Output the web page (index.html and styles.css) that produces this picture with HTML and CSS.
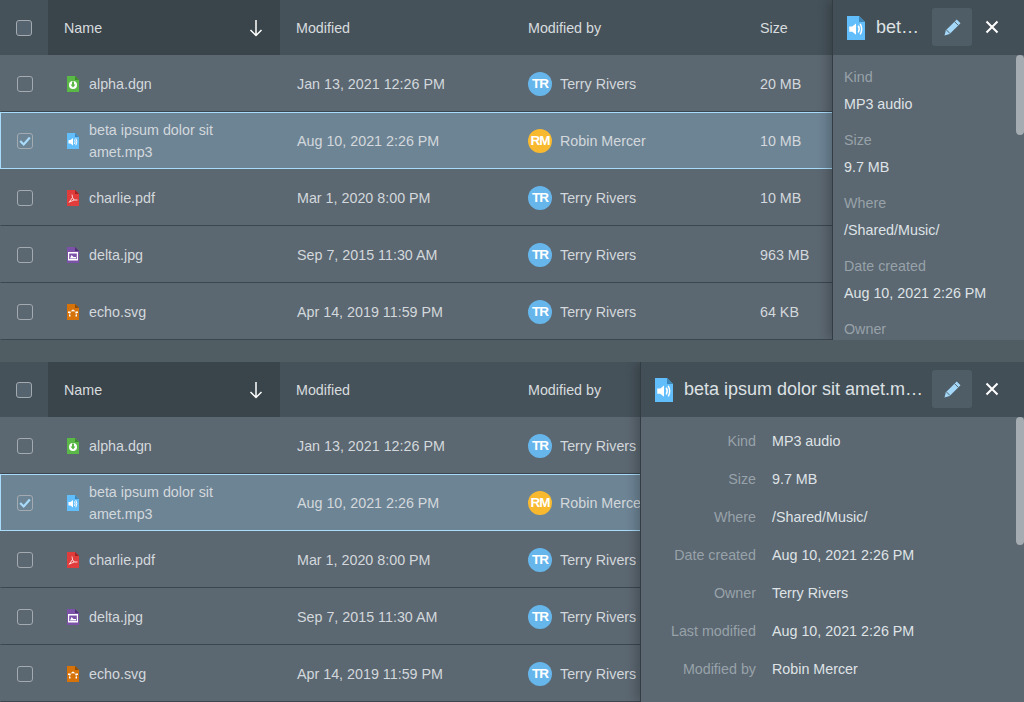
FILE: index.html
```html
<!DOCTYPE html>
<html>
<head>
<meta charset="UTF-8">
<title>Files</title>
<link rel="stylesheet" href="styles.css">
</head>
<body>
<svg class="defs" width="0" height="0">
  <symbol id="file-dgn" viewBox="0 0 12 16">
    <path d="M0 0H8L12 4V16H0Z" fill="#5ab946"/><path d="M8 0L12 4H8Z" fill="#3d8a2e"/>
    <circle cx="6" cy="9" r="4" fill="#fff"/><path d="M5 5.500H7V8.500H8.500L6 11.500L3.500 8.500H5Z" fill="#5ab946"/>
  </symbol>
  <symbol id="file-mp3" viewBox="0 0 12 16">
    <path d="M0 0H8L12 4V16H0Z" fill="#62bdfb"/><path d="M8 0L12 4H8Z" fill="#3f86b8"/>
    <path d="M1.500 7H3.500L6 5V12.500L3.500 10.500H1.500Z" fill="#fff"/>
    <path d="M7.500 6.500Q8.800 8.700 7.500 11M8.800 5.200Q10.800 8.700 8.800 12.300" fill="none" stroke="#fff" stroke-width="1"/>
  </symbol>
  <symbol id="file-pdf" viewBox="0 0 12 16">
    <path d="M0 0H8L12 4V16H0Z" fill="#e03c3c"/><path d="M8 0L12 4H8Z" fill="#9c2424"/>
    <path d="M2 12.500L5.500 7.500L5 4.500M5.500 7.500L7 10H10.500M7 10L2.500 12" fill="none" stroke="#fff" stroke-width="0.800"/>
  </symbol>
  <symbol id="file-jpg" viewBox="0 0 12 16">
    <path d="M0 0H8L12 4V16H0Z" fill="#7b52a8"/><path d="M8 0L12 4H8Z" fill="#4f3073"/>
    <path d="M1 5H11V13.500H1Z" fill="#fff"/><path d="M2.200 6.500H9.800V12H2.200Z" fill="#7b52a8"/>
    <path d="M3 11.500L4.500 8L6.500 10H9V11.500Z" fill="#fff"/>
  </symbol>
  <symbol id="file-svg" viewBox="0 0 12 16">
    <path d="M0 0H8L12 4V16H0Z" fill="#d5720a"/><path d="M8 0L12 4H8Z" fill="#8f4c05"/>
    <path d="M2.500 11.500Q3 6.500 6 6.500Q9 6.500 9.500 11.500" fill="none" stroke="#fff" stroke-width="0.800"/>
    <path d="M1 7.500H3V9H1ZM9 7.500H11V9H9ZM5 5.800H7V7.300H5ZM2 11H3.500V12.500H2ZM8.500 11H10V12.500H8.500Z" fill="#fff"/>
  </symbol>
  <symbol id="pencil" viewBox="0 0 18 18">
    <path d="M13.500 0.500L17.500 4.500L6 16L0.500 17.500L2 12Z" fill="#a4d8f8"/>
    <path d="M11.200 2.800L15.200 6.800" stroke="#4f5d67" stroke-width="1"/>
    <path d="M2.500 11.500L6.500 15.500" stroke="#4f5d67" stroke-width="1"/>
  </symbol>
  <symbol id="close" viewBox="0 0 14 14">
    <path d="M1.500 1.500L12.500 12.500M12.500 1.500L1.500 12.500" stroke="#fff" stroke-width="2"/>
  </symbol>
  <symbol id="sort" viewBox="0 0 14 18">
    <path d="M7 1V16.500M1.500 11L7 16.500L12.500 11" fill="none" stroke="#fff" stroke-width="1.500"/>
  </symbol>
  <symbol id="tick" viewBox="0 0 16 16">
    <path d="M2.500 8L6.500 12L13.500 4" fill="none" stroke="#a9dcfa" stroke-width="2.500"/>
  </symbol>
</svg>

<div class="browser">
  <div class="head">
    <div class="hcell"><span class="box box-head"></span></div>
    <div class="hcell hcell-sorted">Name <svg class="sort"><use href="#sort"/></svg></div>
    <div class="hcell">Modified</div>
    <div class="hcell">Modified by</div>
    <div class="hcell">Size</div>
  </div>
  <div class="row">
    <div class="cell"><span class="box"></span></div>
    <div class="cell"><svg class="ficon"><use href="#file-dgn"/></svg><span class="fname">alpha.dgn</span></div>
    <div class="cell">Jan 13, 2021 12:26 PM</div>
    <div class="cell"><span class="avatar">TR</span>Terry Rivers</div>
    <div class="cell">20 MB</div>
  </div>
  <div class="row selected">
    <div class="cell"><span class="box"><svg class="tick"><use href="#tick"/></svg></span></div>
    <div class="cell"><svg class="ficon"><use href="#file-mp3"/></svg><span class="fname">beta ipsum dolor sit amet.mp3</span></div>
    <div class="cell">Aug 10, 2021 2:26 PM</div>
    <div class="cell"><span class="avatar avatar-rm">RM</span>Robin Mercer</div>
    <div class="cell">10 MB</div>
  </div>
  <div class="row">
    <div class="cell"><span class="box"></span></div>
    <div class="cell"><svg class="ficon"><use href="#file-pdf"/></svg><span class="fname">charlie.pdf</span></div>
    <div class="cell">Mar 1, 2020 8:00 PM</div>
    <div class="cell"><span class="avatar">TR</span>Terry Rivers</div>
    <div class="cell">10 MB</div>
  </div>
  <div class="row">
    <div class="cell"><span class="box"></span></div>
    <div class="cell"><svg class="ficon"><use href="#file-jpg"/></svg><span class="fname">delta.jpg</span></div>
    <div class="cell">Sep 7, 2015 11:30 AM</div>
    <div class="cell"><span class="avatar">TR</span>Terry Rivers</div>
    <div class="cell">963 MB</div>
  </div>
  <div class="row">
    <div class="cell"><span class="box"></span></div>
    <div class="cell"><svg class="ficon"><use href="#file-svg"/></svg><span class="fname">echo.svg</span></div>
    <div class="cell">Apr 14, 2019 11:59 PM</div>
    <div class="cell"><span class="avatar">TR</span>Terry Rivers</div>
    <div class="cell">64 KB</div>
  </div>

  <div class="panel panel-narrow">
    <div class="panel-head">
      <svg class="picon"><use href="#file-mp3"/></svg>
      <span class="ptitle">beta ipsum dolor sit amet.mp3</span>
      <span class="edit"><svg class="pencil"><use href="#pencil"/></svg></span>
      <span class="closer"><svg class="x"><use href="#close"/></svg></span>
    </div>
    <div class="panel-body">
      <div class="scrollbar"></div>
      <div class="info"><div class="label">Kind</div><div class="value">MP3 audio</div></div>
      <div class="info"><div class="label">Size</div><div class="value">9.7 MB</div></div>
      <div class="info"><div class="label">Where</div><div class="value">/Shared/Music/</div></div>
      <div class="info"><div class="label">Date created</div><div class="value">Aug 10, 2021 2:26 PM</div></div>
      <div class="info"><div class="label">Owner</div><div class="value">Terry Rivers</div></div>
    </div>
  </div>
</div>

<div class="browser">
  <div class="head">
    <div class="hcell"><span class="box box-head"></span></div>
    <div class="hcell hcell-sorted">Name <svg class="sort"><use href="#sort"/></svg></div>
    <div class="hcell">Modified</div>
    <div class="hcell">Modified by</div>
    <div class="hcell">Size</div>
  </div>
  <div class="row">
    <div class="cell"><span class="box"></span></div>
    <div class="cell"><svg class="ficon"><use href="#file-dgn"/></svg><span class="fname">alpha.dgn</span></div>
    <div class="cell">Jan 13, 2021 12:26 PM</div>
    <div class="cell"><span class="avatar">TR</span>Terry Rivers</div>
    <div class="cell">20 MB</div>
  </div>
  <div class="row selected">
    <div class="cell"><span class="box"><svg class="tick"><use href="#tick"/></svg></span></div>
    <div class="cell"><svg class="ficon"><use href="#file-mp3"/></svg><span class="fname">beta ipsum dolor sit amet.mp3</span></div>
    <div class="cell">Aug 10, 2021 2:26 PM</div>
    <div class="cell"><span class="avatar avatar-rm">RM</span>Robin Mercer</div>
    <div class="cell">10 MB</div>
  </div>
  <div class="row">
    <div class="cell"><span class="box"></span></div>
    <div class="cell"><svg class="ficon"><use href="#file-pdf"/></svg><span class="fname">charlie.pdf</span></div>
    <div class="cell">Mar 1, 2020 8:00 PM</div>
    <div class="cell"><span class="avatar">TR</span>Terry Rivers</div>
    <div class="cell">10 MB</div>
  </div>
  <div class="row">
    <div class="cell"><span class="box"></span></div>
    <div class="cell"><svg class="ficon"><use href="#file-jpg"/></svg><span class="fname">delta.jpg</span></div>
    <div class="cell">Sep 7, 2015 11:30 AM</div>
    <div class="cell"><span class="avatar">TR</span>Terry Rivers</div>
    <div class="cell">963 MB</div>
  </div>
  <div class="row">
    <div class="cell"><span class="box"></span></div>
    <div class="cell"><svg class="ficon"><use href="#file-svg"/></svg><span class="fname">echo.svg</span></div>
    <div class="cell">Apr 14, 2019 11:59 PM</div>
    <div class="cell"><span class="avatar">TR</span>Terry Rivers</div>
    <div class="cell">64 KB</div>
  </div>

  <div class="panel panel-wide">
    <div class="panel-head">
      <svg class="picon"><use href="#file-mp3"/></svg>
      <span class="ptitle">beta ipsum dolor sit amet.mp3</span>
      <span class="edit"><svg class="pencil"><use href="#pencil"/></svg></span>
      <span class="closer"><svg class="x"><use href="#close"/></svg></span>
    </div>
    <div class="panel-body">
      <div class="scrollbar"></div>
      <div class="info"><div class="label">Kind</div><div class="value">MP3 audio</div></div>
      <div class="info"><div class="label">Size</div><div class="value">9.7 MB</div></div>
      <div class="info"><div class="label">Where</div><div class="value">/Shared/Music/</div></div>
      <div class="info"><div class="label">Date created</div><div class="value">Aug 10, 2021 2:26 PM</div></div>
      <div class="info"><div class="label">Owner</div><div class="value">Terry Rivers</div></div>
      <div class="info"><div class="label">Last modified</div><div class="value">Aug 10, 2021 2:26 PM</div></div>
      <div class="info"><div class="label">Modified by</div><div class="value">Robin Mercer</div></div>
    </div>
  </div>
</div>
</body>
</html>
```

FILE: styles.css
```css
html, body {height:100%; overflow:hidden;}
body {margin:0; background:#505e64; font:14.3px/22px "Liberation Sans", Arial, sans-serif; color:#d3d8dc;}
.defs {position:absolute;}

.browser {position:relative; height:340px; margin-bottom:22px; overflow:hidden; background:#5b6771;}

.head {display:grid; grid-template-columns:48px 232px 232px 232px 1fr; height:55px; background:#46525a;}
.hcell {display:flex; align-items:center; padding-left:16px; color:#d8dcdf;}
.hcell-sorted {justify-content:space-between; padding-right:17px; background:#3a454b;}
.sort {width:14px; height:18px;}

.row {display:grid; grid-template-columns:48px 232px 231px 232px 1fr; box-sizing:border-box; height:57px; border:1px solid transparent; border-bottom-color:#3b464e;}
.row.selected {background:#6d8495; border-color:#a9dcfa;}
.cell {display:flex; align-items:center; padding-left:16px; white-space:nowrap;}

.box {display:block; box-sizing:border-box; width:16px; height:16px; border:1px solid #a3abb1; border-radius:3px;}
.box-head {background:#566470;}
.tick {display:block; width:14px; height:14px;}

.ficon {flex:none; width:12px; height:16px; margin:0 10px 0 2px;}
.fname {white-space:normal; padding-right:16px;}

.avatar {flex:none; width:24px; height:24px; margin-right:8px; border-radius:50%; background:#66b6ec; color:#fff; font-weight:bold; font-size:13.5px; letter-spacing:-1px; line-height:24px; text-align:center;}
.avatar-rm {background:#f9b92f;}

.panel {position:absolute; top:0; right:0; bottom:0; box-sizing:border-box; border-left:1px solid #323c43; background:#5b6771; box-shadow:-4px 0 10px rgba(0,0,0,0.22);}
.panel-narrow {width:192px;}
.panel-wide {width:384px;}

.panel-head {display:flex; align-items:center; height:55px; padding:0 12px 1px 14px; box-sizing:border-box; background:#434f57;}
.picon {flex:none; width:18px; height:24px; margin:1px 11px 0 0;}
.ptitle {flex:1; min-width:0; margin-right:7px; overflow:hidden; white-space:nowrap; text-overflow:ellipsis; font-size:18px; color:#dde1e4;}
.edit {flex:none; display:flex; align-items:center; justify-content:center; width:40px; height:38px; border-radius:3px; background:#4f5d67;}
.pencil {width:17px; height:17px;}
.closer {flex:none; display:flex; align-items:center; justify-content:center; width:40px; height:38px;}
.x {width:14px; height:14px;}

.panel-body {position:relative; height:285px; overflow:hidden;}
.panel-wide .panel-body {padding-top:13px;}
.scrollbar {position:absolute; top:0; right:0; width:8px; height:80px; border-radius:4px; background:#a5adb3;}
.panel-wide .scrollbar {height:128px;}

.label {color:#98a2a9;}
.value {color:#dfe3e6;}
.panel-narrow .panel-body {padding:11px 11px 0;}
.panel-narrow .info {margin-bottom:14px;}
.panel-narrow .label {margin-bottom:5px;}
.panel-wide .info {display:flex; margin-bottom:16px;}
.panel-wide .label {width:115px; margin-right:16px; text-align:right;}
```
